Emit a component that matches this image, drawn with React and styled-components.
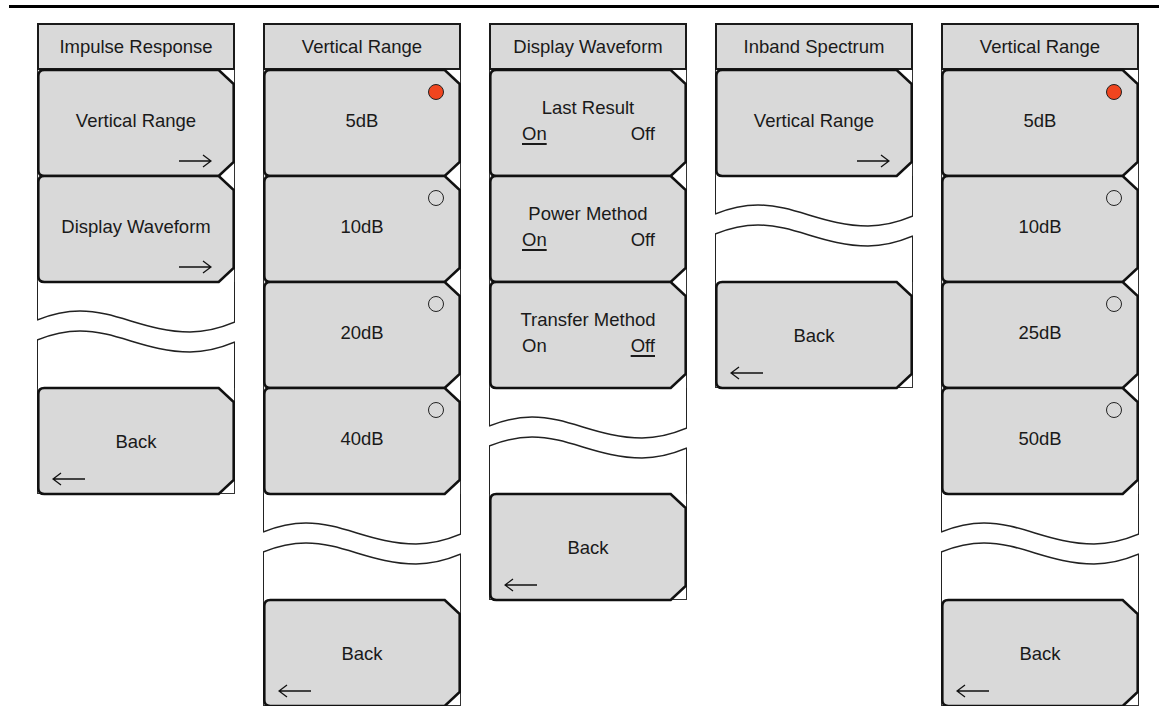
import React from 'react';
import styled, { createGlobalStyle } from 'styled-components';

const GlobalStyle = createGlobalStyle`
  body {
    margin: 0;
    background: #fff;
    font-family: "Liberation Sans", Arial, sans-serif;
    color: #1a1a1a;
  }
`;

const Page = styled.div`
  padding: 5px 5px 0 9px;
  width: 1164px;
  box-sizing: border-box;
`;

const TopRule = styled.div`
  height: 2.5px;
  width: 1150px;
  background: #000;
`;

const Columns = styled.div`
  display: flex;
  align-items: flex-start;
  gap: 28px;
  margin-top: 15.5px;
  padding-left: 28px;
`;

const Column = styled.div`
  width: 198px;
  display: flex;
  flex-direction: column;
`;

const Header = styled.div`
  height: 47px;
  box-sizing: border-box;
  border: 2px solid #1a1a1a;
  background: #d9d9d9;
  display: flex;
  align-items: center;
  justify-content: center;
  font-size: 18.5px;
  padding-top: 1px;
`;

const Slot = styled.div`
  position: relative;
  height: 106px;
  box-sizing: border-box;
  border-left: 1px solid #333;
  border-right: 1px solid #333;
  border-bottom: ${(p) => (p.$last ? '1px solid #333' : 'none')};
`;

const BreakSlot = styled.div`
  height: 106px;
`;

const KeyShape = styled.svg`
  position: absolute;
  left: -1px;
  top: -2px;
  overflow: visible;
`;

const KeyBody = styled.div`
  position: relative;
  height: 100%;
  display: flex;
  flex-direction: column;
  align-items: center;
  justify-content: center;
  padding: ${(p) => (p.$back ? '3px 0 0' : '0 0 5px')};
  box-sizing: border-box;
  font-size: 18.5px;
  line-height: 26px;
`;

const ToggleRow = styled.div`
  align-self: stretch;
  display: flex;
  justify-content: space-between;
  padding: 0 31px 0 32px;
`;

const ToggleWord = styled.span`
  text-decoration: ${(p) => (p.$active ? 'underline' : 'none')};
  text-decoration-thickness: 1.5px;
  text-underline-offset: 3px;
`;

const Radio = styled.span`
  position: absolute;
  top: 14px;
  right: 16px;
  width: 16px;
  height: 16px;
  box-sizing: border-box;
  border-radius: 50%;
  border: 1.2px solid #222;
  background: ${(p) => (p.$on ? '#f0451f' : 'transparent')};
`;

const ArrowMark = styled.svg`
  position: absolute;
  top: 84px;
  ${(p) => (p.$back ? 'left: 14px;' : 'right: 22px;')}
`;

const KeyOutline = () => (
  <KeyShape width="198" height="110" viewBox="0 -2 198 110">
    <path
      d="M7.3 0 H181.7 L196.7 14 V92 L181.7 106 H7.3 Q1.3 106 1.3 100 V6 Q1.3 0 7.3 0 Z"
      fill="#d9d9d9"
      stroke="#111"
      strokeWidth="2.6"
      strokeLinejoin="miter"
    />
  </KeyShape>
);

const Arrow = ({ back }) => (
  <ArrowMark $back={back} width="34" height="14" viewBox="0 0 34 14">
    {back ? (
      <path d="M1 7 H33 M9 1 L1 7 L9 13" fill="none" stroke="#111" strokeWidth="1.3" />
    ) : (
      <path d="M1 7 H33 M25 1 L33 7 L25 13" fill="none" stroke="#111" strokeWidth="1.3" />
    )}
  </ArrowMark>
);

const SoftKey = ({ item, last }) => (
  <Slot $last={last}>
    <KeyOutline />
    <KeyBody $back={item.type === 'back'}>
      {item.type === 'toggle' ? (
        <>
          <span>{item.label}</span>
          <ToggleRow>
            <ToggleWord $active={item.value === 'on'}>On</ToggleWord>
            <ToggleWord $active={item.value === 'off'}>Off</ToggleWord>
          </ToggleRow>
        </>
      ) : (
        <span>{item.label}</span>
      )}
    </KeyBody>
    {item.type === 'radio' && <Radio $on={item.on} />}
    {item.type === 'menu' && <Arrow />}
    {item.type === 'back' && <Arrow back />}
  </Slot>
);

// the torn-off gap between the last key and Back
const Break = () => (
  <BreakSlot>
    <svg width="198" height="106" viewBox="0 0 198 106">
      <g fill="none" stroke="#222">
        <path d="M0.5 0 V38 M197.5 0 V40" strokeWidth="1" />
        <path d="M0.5 58 V106 M197.5 60 V106" strokeWidth="1" />
        <path
          d="M0 38 C15 32 30 29 43 29 C80 29 110 50 153 50 C172 50 186 45 198 40"
          strokeWidth="1.5"
        />
        <path
          d="M0 58 C15 52 30 49 43 49 C80 49 110 70 153 70 C172 70 186 65 198 60"
          strokeWidth="1.5"
        />
      </g>
    </svg>
  </BreakSlot>
);

const menus = [
  {
    title: 'Impulse Response',
    items: [
      { type: 'menu', label: 'Vertical Range' },
      { type: 'menu', label: 'Display Waveform' },
    ],
  },
  {
    title: 'Vertical Range',
    items: [
      { type: 'radio', label: '5dB', on: true },
      { type: 'radio', label: '10dB' },
      { type: 'radio', label: '20dB' },
      { type: 'radio', label: '40dB' },
    ],
  },
  {
    title: 'Display Waveform',
    items: [
      { type: 'toggle', label: 'Last Result', value: 'on' },
      { type: 'toggle', label: 'Power Method', value: 'on' },
      { type: 'toggle', label: 'Transfer Method', value: 'off' },
    ],
  },
  {
    title: 'Inband Spectrum',
    items: [{ type: 'menu', label: 'Vertical Range' }],
  },
  {
    title: 'Vertical Range',
    items: [
      { type: 'radio', label: '5dB', on: true },
      { type: 'radio', label: '10dB' },
      { type: 'radio', label: '25dB' },
      { type: 'radio', label: '50dB' },
    ],
  },
];

const App = () => (
  <Page>
    <GlobalStyle />
    <TopRule />
    <Columns>
      {menus.map((menu, i) => (
        <Column key={i}>
          <Header>{menu.title}</Header>
          {menu.items.map((item, j) => (
            <SoftKey key={j} item={item} />
          ))}
          <Break />
          <SoftKey item={{ type: 'back', label: 'Back' }} last />
        </Column>
      ))}
    </Columns>
  </Page>
);

export default App;
